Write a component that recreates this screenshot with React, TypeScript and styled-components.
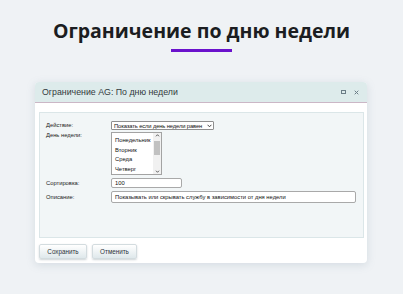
import React from "react";
import styled, { createGlobalStyle } from "styled-components";

const GlobalStyle = createGlobalStyle`
  html, body { margin: 0; padding: 0; background: #eff2f5; }
  * { box-sizing: border-box; }
`;

const Page = styled.div`
  width: 403px;
  height: 294px;
  display: flex;
  flex-direction: column;
  align-items: center;
  background: #eff2f5;
  overflow: hidden;
`;

const Title = styled.h1`
  margin: 18px 0 0;
  font-family: "Open Sans", "Noto Sans", sans-serif;
  font-weight: 700;
  font-size: 19.5px;
  line-height: 26px;
  color: #1b1d21;
`;

const Accent = styled.div`
  width: 61px;
  height: 3px;
  margin-top: 5px;
  background: #6a12cc;
`;

const Dialog = styled.div`
  align-self: flex-start;
  margin: 30px 0 0 35px;
  width: 332px;
  height: 181px;
  background: #ffffff;
  border-radius: 4px;
  box-shadow: 0 2px 8px rgba(120, 140, 160, 0.22);
  display: flex;
  flex-direction: column;
  overflow: hidden;
  font-family: "Liberation Sans", Arial, sans-serif;
`;

const Header = styled.div`
  height: 21px;
  flex: none;
  display: flex;
  align-items: center;
  justify-content: space-between;
  padding: 0 8px 0 7px;
  background: #ddebeb;
  border-bottom: 1px solid #cbb7c6;
`;

const HeaderTitle = styled.span`
  font-size: 8.8px;
  color: #333a40;
`;

const HeaderIcons = styled.div`
  display: flex;
  align-items: center;
  gap: 8px;
`;

const Body = styled.div`
  flex: 1;
  display: flex;
  flex-direction: column;
  padding: 9px 3px 4px 4px;
`;

const Panel = styled.div`
  height: 126px;
  background: #f2f6f7;
  border: 1px solid #dbe6e8;
  padding: 8px 6px 0 6px;
  display: flex;
  flex-direction: column;
`;

const Row = styled.div<{ $mt?: number }>`
  display: flex;
  align-items: flex-start;
  margin-top: ${(p) => p.$mt ?? 0}px;
`;

const Label = styled.div<{ $pt?: number }>`
  width: 65px;
  flex: none;
  font-size: 5.8px;
  line-height: 7px;
  color: #222;
  padding-top: ${(p) => p.$pt ?? 0}px;
`;

const FakeSelect = styled.div`
  width: 103px;
  height: 9px;
  border: 1px solid #8f8f8f;
  border-radius: 1px;
  background: #fff;
  display: flex;
  align-items: center;
  gap: 1px;
  padding: 0 1px 0 2px;
  font-size: 5.8px;
  color: #111;
  white-space: nowrap;
`;

const SelectText = styled.span`
  flex: 1;
  letter-spacing: -0.12px;
`;

const ListBox = styled.div`
  width: 51px;
  height: 43px;
  border: 1px solid #a3a3a3;
  background: #fff;
  display: flex;
`;

const Options = styled.div`
  flex: 1;
  padding: 3px 0 0 3px;
  display: flex;
  flex-direction: column;
  overflow: hidden;
`;

const Option = styled.div`
  font-size: 5.8px;
  height: 9.7px;
  line-height: 9.7px;
  color: #111;
  white-space: nowrap;
`;

const ScrollBar = styled.div`
  width: 8px;
  flex: none;
  background: #f1f1f1;
  display: flex;
  flex-direction: column;
  align-items: center;
  justify-content: space-between;
  position: relative;
`;

const Thumb = styled.div`
  position: absolute;
  left: 1px;
  right: 1px;
  top: 8px;
  height: 14px;
  background: #c1c1c1;
`;

const TextInput = styled.div<{ $w: number }>`
  width: ${(p) => p.$w}px;
  height: ${(p) => (p.$w > 100 ? 12 : 10)}px;
  border: 1px solid #a9a9a9;
  border-radius: 2px;
  background: #fff;
  font-size: 5.8px;
  color: #111;
  padding: 0 3px;
  display: flex;
  align-items: center;
  white-space: nowrap;
`;

const Buttons = styled.div`
  display: flex;
  gap: 5px;
  margin-top: 6px;
`;

const Button = styled.button<{ $w: number }>`
  width: ${(p) => p.$w}px;
  height: 15px;
  padding: 0;
  border: 1px solid #d3dcdf;
  border-radius: 2px;
  background: linear-gradient(#ffffff, #dfe8eb);
  box-shadow: 0 1px 2px rgba(90, 110, 120, 0.3);
  font-family: "Liberation Sans", Arial, sans-serif;
  font-size: 6.3px;
  color: #2b3238;
  display: flex;
  align-items: center;
  justify-content: center;
`;

const Chevron = () => (
  <svg width="5" height="4" viewBox="0 0 5 4" style={{ flex: "none" }}>
    <path d="M0.6 0.8 L2.5 2.8 L4.4 0.8" fill="none" stroke="#333" strokeWidth="0.9" />
  </svg>
);

const Arrow = ({ up }: { up?: boolean }) => (
  <svg width="5" height="5" viewBox="0 0 5 5">
    <path
      d={up ? "M1 3.3 L2.5 1.7 L4 3.3" : "M1 1.7 L2.5 3.3 L4 1.7"}
      fill="none"
      stroke="#505050"
      strokeWidth="0.9"
    />
  </svg>
);

export default function App() {
  return (
    <Page>
      <GlobalStyle />
      <Title>Ограничение по дню недели</Title>
      <Accent />
      <Dialog>
        <Header>
          <HeaderTitle>Ограничение AG: По дню недели</HeaderTitle>
          <HeaderIcons>
            <svg width="5" height="4" viewBox="0 0 5 4">
              <rect x="0.5" y="0.5" width="4" height="3" fill="none" stroke="#6b7d86" strokeWidth="1" />
            </svg>
            <svg width="5" height="5" viewBox="0 0 5 5">
              <path d="M0.7 0.7 L4.3 4.3 M4.3 0.7 L0.7 4.3" stroke="#6b7d86" strokeWidth="1" />
            </svg>
          </HeaderIcons>
        </Header>
        <Body>
          <Panel>
            <Row>
              <Label $pt={1}>Действие:</Label>
              <FakeSelect>
                <SelectText>Показать если день недели равен</SelectText>
                <Chevron />
              </FakeSelect>
            </Row>
            <Row $mt={2}>
              <Label $pt={0}>День недели:</Label>
              <ListBox>
                <Options>
                  <Option>Понедельник</Option>
                  <Option>Вторник</Option>
                  <Option>Среда</Option>
                  <Option>Четверг</Option>
                </Options>
                <ScrollBar>
                  <Arrow up />
                  <Thumb />
                  <Arrow />
                </ScrollBar>
              </ListBox>
            </Row>
            <Row $mt={3}>
              <Label $pt={2}>Сортировка:</Label>
              <TextInput $w={71}>100</TextInput>
            </Row>
            <Row $mt={3}>
              <Label $pt={3}>Описание:</Label>
              <TextInput $w={245}>Показывать или скрывать службу в зависимости от дня недели</TextInput>
            </Row>
          </Panel>
          <Buttons>
            <Button $w={48}>Сохранить</Button>
            <Button $w={45}>Отменить</Button>
          </Buttons>
        </Body>
      </Dialog>
    </Page>
  );
}
